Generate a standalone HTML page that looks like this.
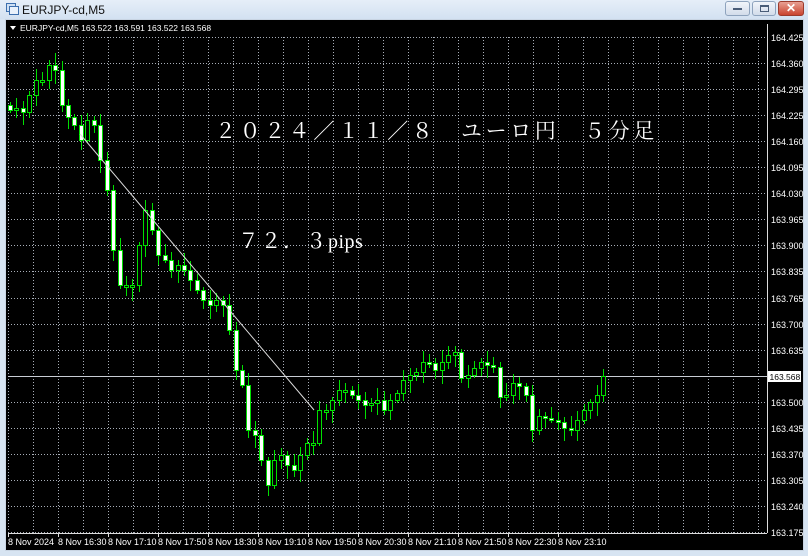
<!DOCTYPE html>
<html><head><meta charset="utf-8"><style>
*{margin:0;padding:0;box-sizing:border-box}
body{width:808px;height:556px;overflow:hidden;background:#d7e4f2;font-family:"Liberation Sans",sans-serif;position:relative}
.title{position:absolute;left:0;top:0;width:808px;height:19px;background:linear-gradient(#e6eef8,#d3e1f1)}
.title span{position:absolute;left:22px;top:3px;font-size:12px;color:#111}
.btn{position:absolute;top:1px;height:15px;border:1px solid #8ea3bd;border-radius:3px;background:linear-gradient(#f1f5fa,#d2dcea)}
#chart{position:absolute;left:5px;top:19px}
</style></head><body>
<div class="title">
<svg style="position:absolute;left:6px;top:3px" width="13" height="12"><rect x="0.5" y="0.5" width="9" height="8" fill="#cfe0f3" stroke="#3d6fae"/><rect x="3.5" y="3.5" width="9" height="8" fill="#e9f1fb" stroke="#3d6fae"/></svg>
<span>EURJPY-cd,M5</span>
<div class="btn" style="left:725px;width:25px"><div style="position:absolute;left:7px;top:6px;width:9px;height:2px;background:#4a5d78"></div></div>
<div class="btn" style="left:752px;width:24px"><div style="position:absolute;left:7px;top:3px;width:9px;height:7px;border:1px solid #4a5d78;border-top-width:2px"></div></div>
<div class="btn" style="left:778px;width:26px;background:linear-gradient(#e8a093,#c9432e);border-color:#9b3b2d"><div style="position:absolute;left:0;top:-1px;width:24px;text-align:center;color:#fff;font-weight:bold;font-size:12px">✕</div></div>
</div>
<svg id="chart" width="799" height="532" viewBox="5 19 799 532"></svg>
<script>
var s='';
s+='<rect x="5" y="19" width="799" height="532" fill="#000"/>';
s+='<rect x="5.5" y="19.5" width="798" height="531" fill="none" stroke="#c8d4e2"/>';
for(var k=0;k<=30;k++){var x=8+25*k;if(x>767)break;s+='<line x1="'+(x+.5)+'" y1="37" x2="'+(x+.5)+'" y2="533" stroke="#a8aeb8" stroke-dasharray="1 2"/>';}
var labels=['164.425','164.360','164.295','164.225','164.160','164.095','164.030','163.965','163.900','163.835','163.765','163.700','163.635','163.570','163.500','163.435','163.370','163.305','163.240','163.175'];
for(var i=0;i<20;i++){var y=Math.round(37+26.05*i)+.5;s+='<line x1="8" y1="'+y+'" x2="767" y2="'+y+'" stroke="#a8aeb8" stroke-dasharray="1 2"/>';
if(i!=13)s+='<text x="771" y="'+(y+3.5)+'" fill="#fff" font-size="9" font-family="Liberation Sans">'+labels[i]+'</text>';}
s+='<line x1="767.5" y1="24" x2="767.5" y2="533" stroke="#ddd"/><line x1="8" y1="533.5" x2="767" y2="533.5" stroke="#ddd"/>';
s+='<line x1="8" y1="376.5" x2="767" y2="376.5" stroke="#c8ccd4"/>';
s+='<rect x="768" y="371" width="33" height="11" fill="#fff"/><text x="769.5" y="380" fill="#000" font-size="8.5">163.568</text>';
var c=[110,108,112,95,80,80,65,70,105,117,125,140,120,125,160,190,250,285,285,285,245,210,230,255,260,270,265,270,280,290,300,305,300,305,330,370,385,430,435,460,485,460,455,465,470,455,443,443,410,410,400,390,390,395,400,405,403,400,410,400,393,380,375,372,362,363,370,362,355,352,378,375,368,362,365,367,397,395,383,386,395,430,416,418,420,422,428,430,420,410,402,395,376];
var n=c.length,prev=105;
for(var i=0;i<n;i++){var x=Math.round(10+i*(593/(n-1)));var o=prev,cl=c[i];var t=Math.min(o,cl),b=Math.max(o,cl);if(b-t<2)b=t+2;
var hi=t-(3+(i*7)%10),lo=b+(3+(i*5)%12);
s+='<line x1="'+(x+.5)+'" y1="'+hi+'" x2="'+(x+.5)+'" y2="'+lo+'" stroke="#00e000"/>';
s+='<rect x="'+(x-1.5)+'" y="'+(t+.5)+'" width="4" height="'+(b-t)+'" fill="'+(cl>o?'#fff':'#000')+'" stroke="#00e000"/>';prev=cl;}
s+='<line x1="80" y1="134" x2="314" y2="410" stroke="#ddd" stroke-width="1"/>';
s+='<path d="M10 26 L16 26 L13 30Z" fill="#fff"/><text x="20" y="31" fill="#fff" font-size="8.5">EURJPY-cd,M5  163.522 163.591 163.522 163.568</text>';
s+='<text x="215" y="138" fill="#fff" font-size="21" letter-spacing="3.6" font-family="Liberation Serif,Noto Serif CJK SC,serif">２０２４／１１／８　ユーロ円　５分足</text>';
s+='<text x="238" y="248" fill="#fff" font-size="21" letter-spacing="1.5" font-family="Liberation Serif,Noto Serif CJK SC,serif">７２．３<tspan letter-spacing="0.5" font-size="20">pips</tspan></text>';
var tl=['8 Nov 2024','8 Nov 16:30','8 Nov 17:10','8 Nov 17:50','8 Nov 18:30','8 Nov 19:10','8 Nov 19:50','8 Nov 20:30','8 Nov 21:10','8 Nov 21:50','8 Nov 22:30','8 Nov 23:10'];
for(var k=0;k<12;k++){var x=8+50*k;s+='<line x1="'+(x+.5)+'" y1="533" x2="'+(x+.5)+'" y2="537" stroke="#ddd"/><text x="'+x+'" y="545" fill="#fff" font-size="9">'+tl[k]+'</text>';}
document.getElementById('chart').innerHTML=s;
</script>
</body></html>
